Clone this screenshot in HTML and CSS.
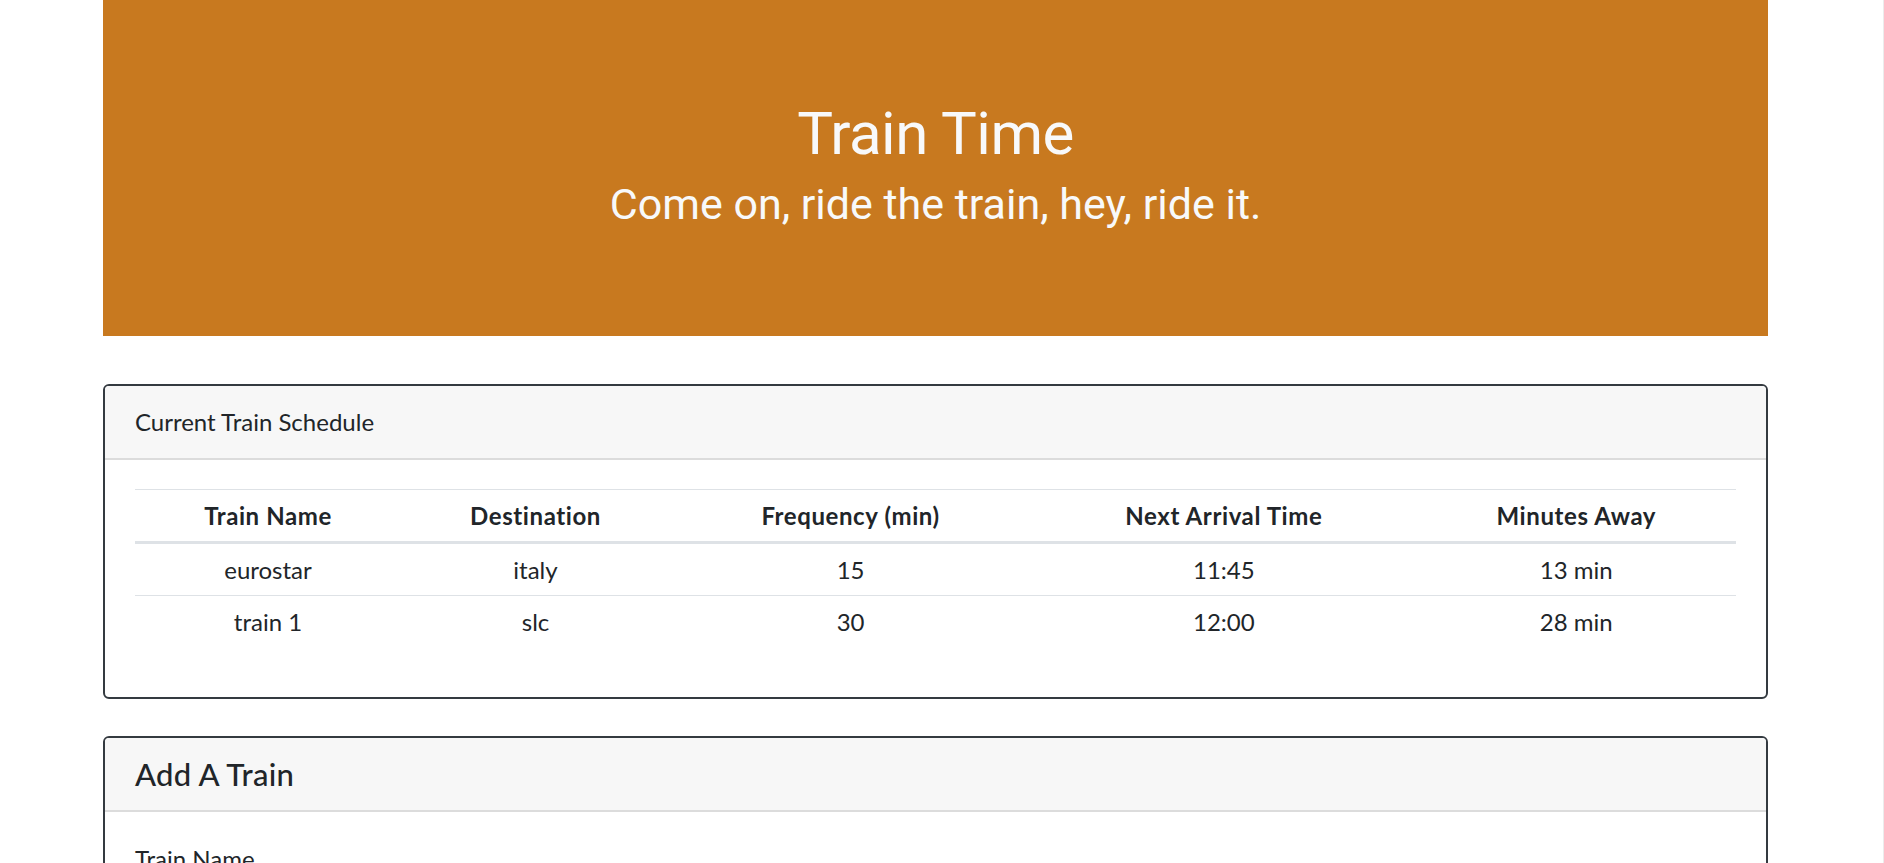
FILE: index.html
```html
<!DOCTYPE html>
<html lang="en">
<head>
<meta charset="utf-8">
<title>Train Time</title>
<link rel="stylesheet" href="styles.css">
</head>
<body>
<div class="container">
  <header class="jumbotron">
    <h1 class="jumbo-title">Train Time</h1>
    <h3 class="jumbo-sub">Come on, ride the train, hey, ride it.</h3>
  </header>

  <section class="card card-schedule">
    <div class="card-header">Current Train Schedule</div>
    <div class="card-body">
      <table class="table">
        <thead>
          <tr>
            <th class="col-name">Train Name</th>
            <th class="col-dest">Destination</th>
            <th class="col-freq">Frequency (min)</th>
            <th class="col-next">Next Arrival Time</th>
            <th class="col-away">Minutes Away</th>
          </tr>
        </thead>
        <tbody>
          <tr>
            <td>eurostar</td>
            <td>italy</td>
            <td>15</td>
            <td>11:45</td>
            <td>13 min</td>
          </tr>
          <tr>
            <td>train 1</td>
            <td>slc</td>
            <td>30</td>
            <td>12:00</td>
            <td>28 min</td>
          </tr>
        </tbody>
      </table>
    </div>
  </section>

  <section class="card card-add">
    <div class="card-header"><h5 class="card-title">Add A Train</h5></div>
    <div class="card-body">
      <form class="add-form">
        <div class="form-group">
          <label class="form-label" for="train-name">Train Name</label>
          <input class="form-control" id="train-name" type="text">
        </div>
        <div class="form-group">
          <label class="form-label" for="destination">Destination</label>
          <input class="form-control" id="destination" type="text">
        </div>
        <div class="form-group">
          <label class="form-label" for="first-time">First Train Time (HH:mm - military time)</label>
          <input class="form-control" id="first-time" type="text">
        </div>
        <div class="form-group">
          <label class="form-label" for="frequency">Frequency (min)</label>
          <input class="form-control" id="frequency" type="text">
        </div>
        <button class="btn" type="submit">Submit</button>
      </form>
    </div>
  </section>
</div>
</body>
</html>
```
FILE: styles.css
```css
html {
  overflow: hidden;
  border-right: 1px solid #ececec;
}

body {
  margin: 0;
  font-family: "Lato", "Open Sans", sans-serif;
  font-size: 24px;
  line-height: 1.5;
  color: #212529;
  background: #ffffff;
}

.container {
  width: 1665px;
  margin-left: 103px;
}

.jumbotron {
  box-sizing: border-box;
  height: 336px;
  padding: 98px 48px 0;
  margin-bottom: 48px;
  background: #c8791f;
  color: #f8f9fa;
  text-align: center;
  font-family: "Roboto", "Noto Sans", sans-serif;
}

.jumbo-title {
  margin: 0 0 9px;
  font-size: 60px;
  font-weight: 400;
  line-height: 72px;
  letter-spacing: -0.5px;
}

.jumbo-sub {
  margin: 0;
  font-size: 43px;
  font-weight: 400;
  line-height: 50px;
}

.card {
  border: 2px solid #343a40;
  border-radius: 6px;
  background: #fff;
  overflow: hidden;
}

.card-schedule {
  margin-bottom: 37px;
}

.card-header {
  padding: 18px 30px;
  background: #f7f7f7;
  border-bottom: 2px solid #dcdcdc;
  line-height: 36px;
}

.card-title {
  margin: 0;
  font-size: 31px;
  font-weight: 500;
  line-height: 36px;
  letter-spacing: 0.3px;
}

.card-body {
  padding: 29px 30px 30px;
}

.table {
  width: 100%;
  border-collapse: collapse;
  margin-bottom: 20px;
  text-align: center;
}

.table th,
.table td {
  padding: 7.5px;
  line-height: 36px;
  border-top: 1px solid #dee2e6;
}

.table th {
  font-weight: 700;
  letter-spacing: 0.6px;
  border-bottom: 3px solid #dee2e6;
}

.col-name { width: 263px; }
.col-dest { width: 263px; }
.col-freq { width: 363px; }
.col-next { width: 392px; }
.col-away { width: 320px; }

.form-group {
  margin-bottom: 24px;
}

.form-label {
  display: block;
  margin-bottom: 12px;
  line-height: 36px;
}

.form-control {
  box-sizing: border-box;
  width: 100%;
  height: 57px;
  padding: 9px 18px;
  font: inherit;
  color: #495057;
  border: 1px solid #ced4da;
  border-radius: 6px;
}

.btn {
  font: inherit;
  padding: 9px 18px;
  color: #fff;
  background: #007bff;
  border: 1px solid #007bff;
  border-radius: 6px;
}
```
